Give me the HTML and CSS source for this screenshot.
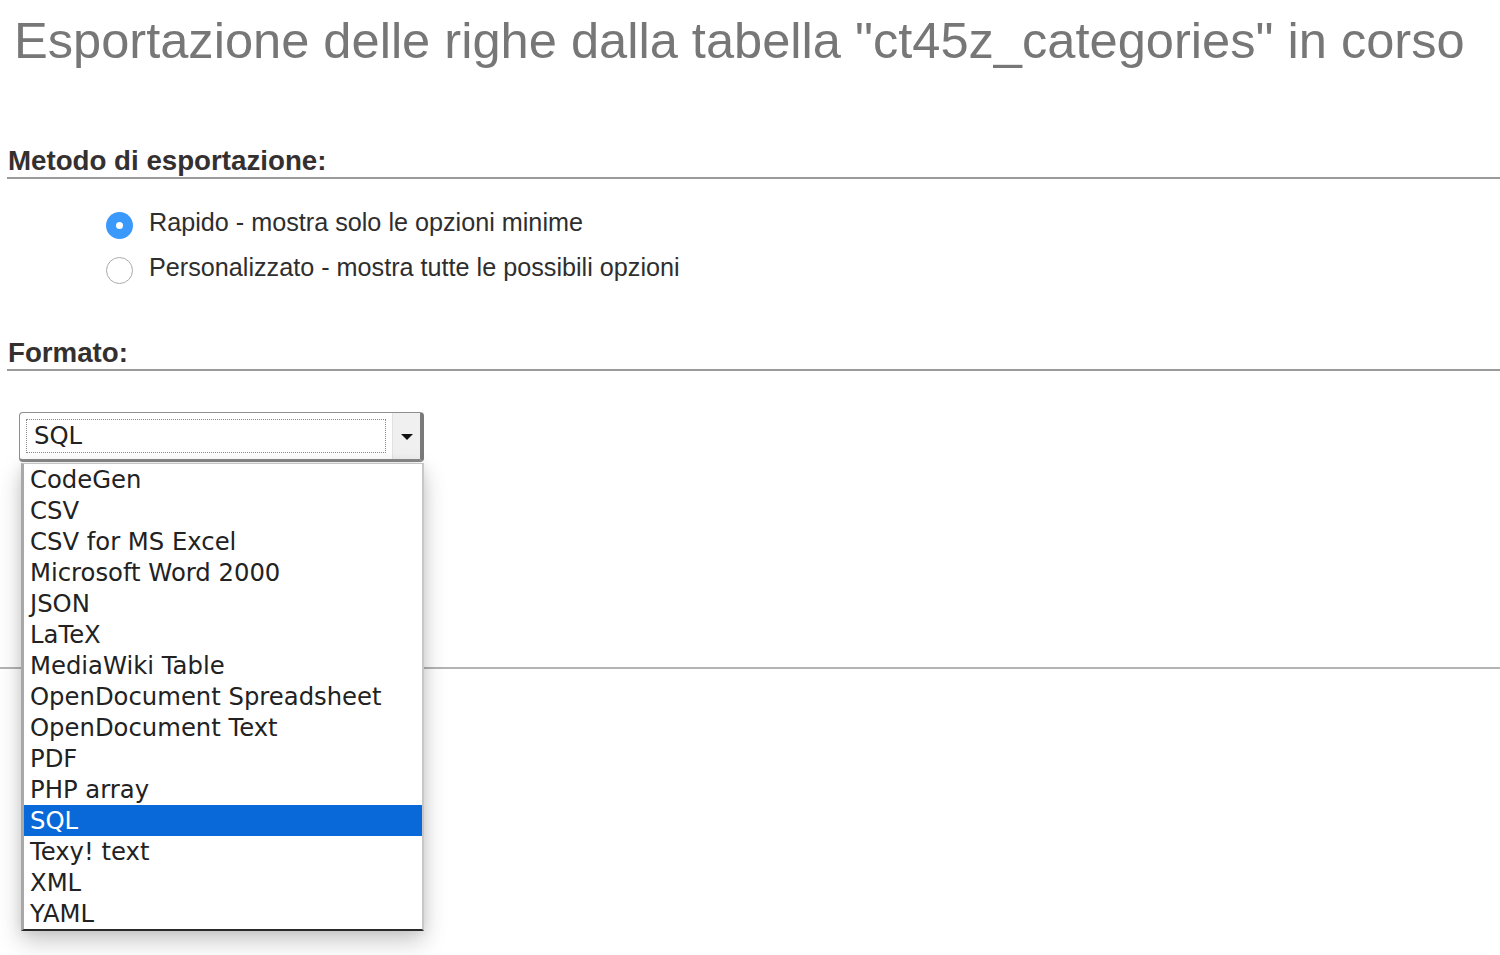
FILE: index.html
```html
<!DOCTYPE html>
<html lang="it">
<head>
<meta charset="utf-8">
<title>Esportazione</title>
<link rel="stylesheet" href="styles.css">
</head>
<body>
<div class="page">
  <h2 class="title">Esportazione delle righe dalla tabella "ct45z_categories" in corso</h2>

  <h3 class="section-head head-method">Metodo di esportazione:</h3>
  <div class="radios">
    <div class="radio-row">
      <span class="radio checked"></span>
      <span class="radio-label">Rapido - mostra solo le opzioni minime</span>
    </div>
    <div class="radio-row">
      <span class="radio"></span>
      <span class="radio-label">Personalizzato - mostra tutte le possibili opzioni</span>
    </div>
  </div>

  <h3 class="section-head head-format">Formato:</h3>
  <div class="select-wrap">
    <div class="select">
      <div class="select-value"><span>SQL</span></div>
      <div class="select-arrow"><span class="tri"></span></div>
    </div>
    <ul class="listbox">
      <li>CodeGen</li>
      <li>CSV</li>
      <li>CSV for MS Excel</li>
      <li>Microsoft Word 2000</li>
      <li>JSON</li>
      <li>LaTeX</li>
      <li>MediaWiki Table</li>
      <li>OpenDocument Spreadsheet</li>
      <li>OpenDocument Text</li>
      <li>PDF</li>
      <li>PHP array</li>
      <li class="selected">SQL</li>
      <li>Texy! text</li>
      <li>XML</li>
      <li>YAML</li>
    </ul>
  </div>
</div>
<div class="divider"></div>
</body>
</html>
```

FILE: styles.css
```css
html, body {
  margin: 0;
  padding: 0;
  background: #ffffff;
}

body {
  font-family: "Liberation Sans", Arial, Helvetica, sans-serif;
  color: #333333;
  min-height: 955px;
}

.page {
  padding-left: 7px;
}

.title {
  margin: 15px 0 0 7px;
  font-size: 50.6px;
  line-height: 51px;
  font-weight: normal;
  color: #777777;
  white-space: nowrap;
}

.section-head {
  margin: 0;
  font-size: 27.7px;
  line-height: 32px;
  font-weight: bold;
  color: #353030;
  padding-left: 1px;
  border-bottom: 2px solid #9a9a9a;
}

.head-method {
  margin-top: 79px;
}

.head-format {
  margin-top: 47px;
}

.radios {
  margin-top: 21px;
  padding-left: 99px;
  display: flex;
  flex-direction: column;
}

.radio-row {
  display: flex;
  align-items: center;
  height: 45px;
  gap: 16px;
}

.radio {
  box-sizing: border-box;
  width: 27px;
  height: 27px;
  border-radius: 50%;
  border: 1px solid #aaaaaa;
  background: #ffffff;
  margin-top: 6px;
  display: flex;
  align-items: center;
  justify-content: center;
  flex: none;
}

.radio.checked {
  border: none;
  background: #3b99fc;
}

.radio.checked::after {
  content: "";
  width: 7px;
  height: 7px;
  border-radius: 50%;
  background: #ffffff;
}

.radio-label {
  font-size: 25.2px;
  line-height: 45px;
  color: #2e2e2e;
  white-space: nowrap;
}

.select-wrap {
  position: relative;
  margin: 41px 0 0 12px;
  width: 405px;
  z-index: 5;
}

.select {
  box-sizing: border-box;
  width: 405px;
  height: 50px;
  display: flex;
  border: 1px solid #8e8e8e;
  border-right: 4px solid #7a7a7a;
  border-bottom: 3px solid #8a8a8a;
  border-radius: 4px;
  background: #ffffff;
}

.select-value {
  flex: 1;
  padding: 6px;
  display: flex;
}

.select-value span {
  flex: 1;
  box-sizing: border-box;
  border: 1px dotted #8a8a8a;
  padding-left: 7px;
  font-family: "DejaVu Sans", Verdana, sans-serif;
  font-size: 24.3px;
  line-height: 32px;
  color: #222222;
}

.select-arrow {
  width: 27px;
  background: #f0f0f0;
  border-left: 1px solid #e2e2e2;
  display: flex;
  align-items: center;
  justify-content: center;
}

.tri {
  width: 0;
  height: 0;
  border-left: 6px solid transparent;
  border-right: 6px solid transparent;
  border-top: 6px solid #111111;
  margin-top: 1px;
}

.listbox {
  position: absolute;
  top: 51px;
  left: 2px;
  width: 403px;
  box-sizing: border-box;
  margin: 0;
  padding: 0;
  list-style: none;
  background: #ffffff;
  border-top: 1px solid #c4c4c4;
  border-left: 3px solid #a8a8a8;
  border-right: 2px solid #c8c8c8;
  border-bottom: 2px solid #2a2a2a;
  box-shadow: 0 10px 22px rgba(0, 0, 0, 0.22), 0 0 10px rgba(0, 0, 0, 0.08);
}

.listbox li {
  height: 31px;
  line-height: 31px;
  padding-left: 6px;
  font-family: "DejaVu Sans", Verdana, sans-serif;
  font-size: 24.3px;
  color: #222222;
  white-space: nowrap;
}

.listbox li.selected {
  background: #0a69d9;
  color: #ffffff;
}

.divider {
  margin-top: 205px;
  height: 2px;
  background: #b4b4b4;
}
```
